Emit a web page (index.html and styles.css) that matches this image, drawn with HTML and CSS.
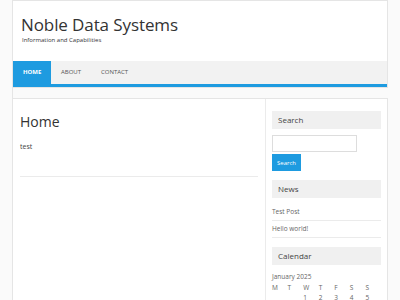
FILE: index.html
```html
<!DOCTYPE html>
<html lang="en">
<head>
  <meta charset="UTF-8">
  <meta name="viewport" content="width=device-width, initial-scale=1.0">
  <title>Noble Data Systems</title>
  <link rel="stylesheet" href="styles.css">
</head>
<body>
  <div class="wrapper">
    <header class="site-header">
      <div class="branding">
        <h1 class="site-title">Noble Data Systems</h1>
        <p class="site-description">Information and Capabilities</p>
      </div>
      <nav class="main-nav">
        <a href="#" class="current">Home</a>
        <a href="#">About</a>
        <a href="#">Contact</a>
      </nav>
    </header>

    <div class="content-box">
      <main class="main-content">
        <h2 class="page-title">Home</h2>
        <p class="entry">test</p>
        <hr class="entry-end">
      </main>

      <aside class="sidebar">
        <div class="widget">
          <h3 class="widget-title">Search</h3>
          <div class="search-form">
            <input type="text" class="search-field">
            <button class="search-submit">Search</button>
          </div>
        </div>

        <div class="widget">
          <h3 class="widget-title">News</h3>
          <ul class="post-list">
            <li>Test Post</li>
            <li>Hello world!</li>
          </ul>
        </div>

        <div class="widget">
          <h3 class="widget-title">Calendar</h3>
          <div class="calendar-caption">January 2025</div>
          <div class="calendar">
            <span>M</span><span>T</span><span>W</span><span>T</span><span>F</span><span>S</span><span>S</span>
            <span></span><span></span><span>1</span><span>2</span><span>3</span><span>4</span><span>5</span>
          </div>
        </div>
      </aside>
    </div>
  </div>
</body>
</html>
```

FILE: styles.css
```css
body {
  margin: 0;
  background-color: #fafafa;
  font-family: 'Open Sans', 'DejaVu Sans', sans-serif;
  color: #444;
}
.wrapper {
  margin: 0 12px;
  border-left: 1px solid #e5e5e5;
}
.site-header {
  background-color: #fff;
  border: 1px solid #e5e5e5;
  border-left: none;
}
.branding {
  padding: 13px 8px 16px;
}
.site-title {
  margin: 0;
  font-size: 17px;
  font-weight: normal;
  line-height: 22px;
  letter-spacing: -0.1px;
  color: #333;
}
.site-description {
  margin: 0;
  font-size: 6px;
  line-height: 9px;
  color: #333;
  padding-left: 1px;
}
.main-nav {
  display: flex;
  background-color: #f2f2f2;
  border-bottom: 3px solid #1e9be0;
}
.main-nav a {
  display: block;
  padding: 0 10px;
  height: 23px;
  line-height: 23px;
  font-size: 6px;
  text-transform: uppercase;
  text-decoration: none;
  color: #555;
}
.main-nav a.current {
  background-color: #1e9be0;
  color: #fff;
  font-weight: bold;
  width: 18px;
}
.content-box {
  display: flex;
  margin-top: 10px;
  background-color: #fff;
  border: 1px solid #e5e5e5;
  border-left: none;
  border-bottom: none;
  min-height: 220px;
}
.main-content {
  width: 238px;
  padding: 11px 7px 0 7px;
  border-right: 1px solid #ebebeb;
}
.page-title {
  margin: 0;
  font-size: 14px;
  font-weight: normal;
  line-height: 24px;
  color: #333;
}
.entry {
  margin: 7px 0 0;
  font-size: 7px;
  line-height: 12px;
}
.entry-end {
  margin: 23px 0 0;
  border: none;
  border-top: 1px solid #ebebeb;
}
.sidebar {
  flex: 1;
  padding: 12px 6px 0 6px;
}
.widget {
  margin-bottom: 9px;
}
.widget-title {
  margin: 0 0 6px;
  background-color: #f0f0f0;
  padding: 0 6px;
  height: 18px;
  line-height: 18px;
  font-size: 8px;
  font-weight: normal;
  color: #444;
}
.search-form {
  display: flex;
  flex-direction: column;
  align-items: flex-start;
  gap: 2px;
}
.search-field {
  box-sizing: border-box;
  width: 85px;
  height: 17px;
  margin: 0;
  border: 1px solid #ddd;
  padding: 0 4px;
}
.search-submit {
  background-color: #1e9be0;
  color: #fff;
  border: none;
  padding: 0 5px;
  height: 17px;
  font-family: inherit;
  font-size: 6px;
  cursor: pointer;
}
.post-list {
  list-style: none;
  margin: 0;
  padding: 0;
}
.post-list li {
  font-size: 6.5px;
  line-height: 16px;
  color: #666;
  border-bottom: 1px solid #ebebeb;
}
.calendar-caption {
  font-size: 6.5px;
  line-height: 12px;
  color: #666;
}
.calendar {
  display: grid;
  grid-template-columns: repeat(7, 1fr);
  font-size: 6.5px;
  line-height: 10px;
  color: #666;
}
```
